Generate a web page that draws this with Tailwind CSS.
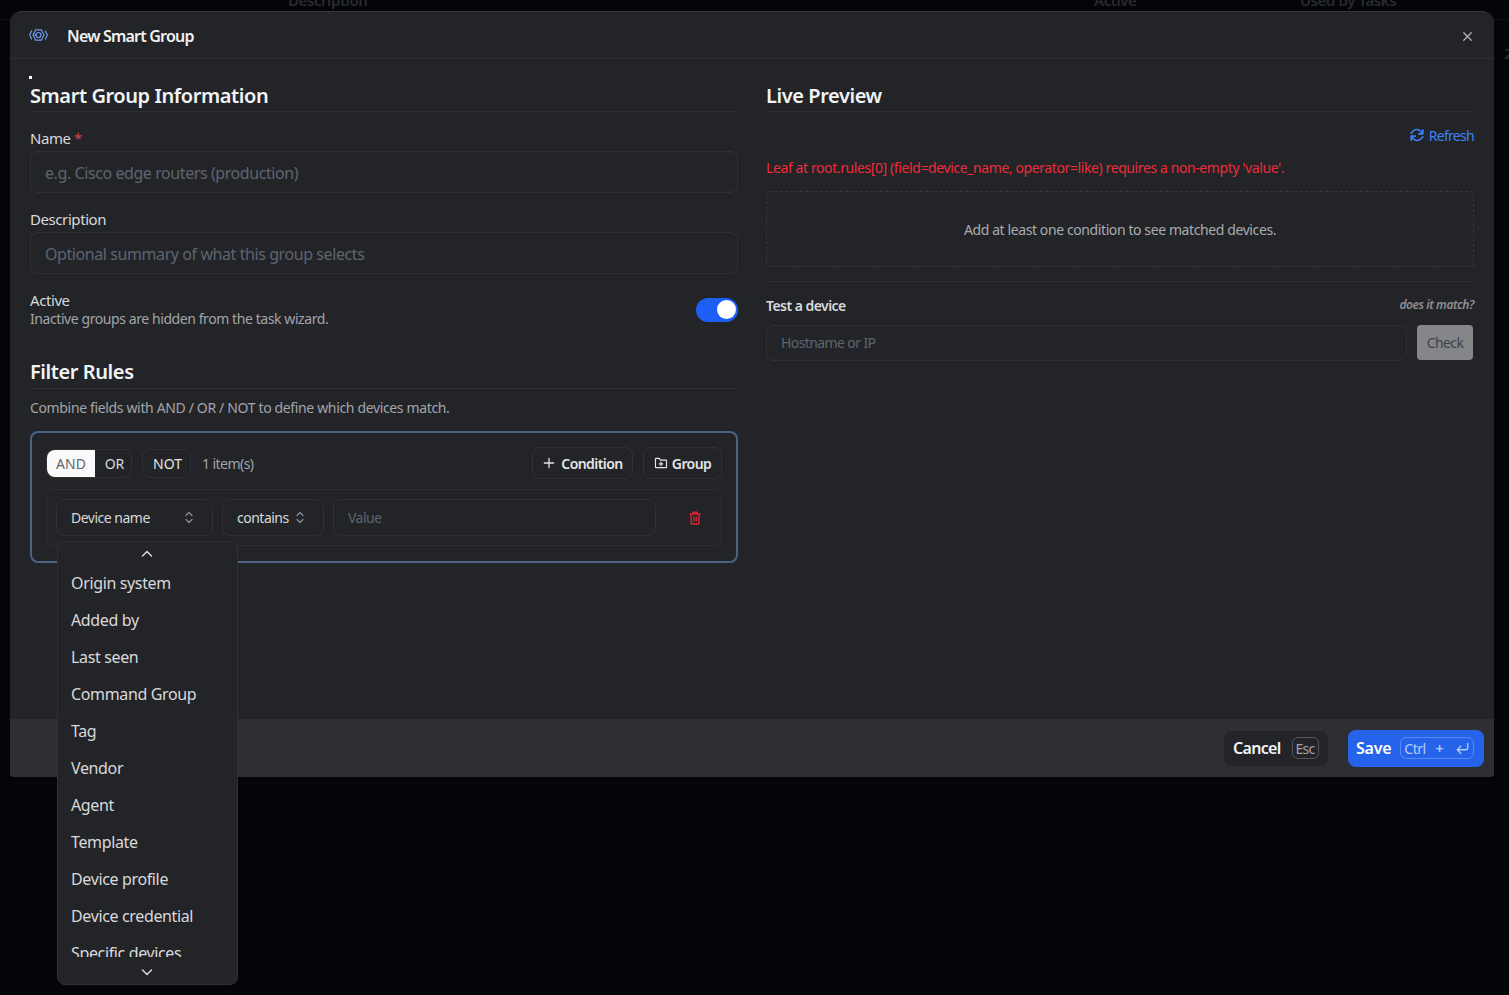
<!DOCTYPE html>
<html lang="en">
  <head>
    <meta charset="UTF-8" />
    <meta name="viewport" content="width=device-width, initial-scale=1.0" />
    <title>New Smart Group</title>
    <script src="https://cdn.jsdelivr.net/npm/@tailwindcss/browser@4"></script>
  </head>
  <body class="h-[995px] overflow-hidden bg-[#040508] font-['Noto_Sans',sans-serif] tracking-[-0.42px] text-[#e4e5e7]">
    <!-- table behind the modal -->
    <div class="absolute top-[19px] left-0 h-px w-full bg-[#0e0f12]"></div>
    <div class="absolute top-[-11px] left-0 w-full text-[15px] font-semibold text-[#2a2b2f]">
      <span class="absolute left-[288px]">Description</span>
      <span class="absolute left-[1094px]">Active</span>
      <span class="absolute left-[1300px]">Used by Tasks</span>
      <span class="absolute top-[53px] left-[1504px]">2</span>
    </div>

    <div class="relative mt-[11px] ml-[10px] flex h-[766px] w-[1484px] flex-col overflow-hidden rounded-t-xl rounded-b-[4px] border-t border-[#37383c] bg-[#232428]">
      <!-- header -->
      <div class="flex h-[47px] shrink-0 items-center border-b border-[#2e2f33] px-[20px]">
        <svg class="-ml-[1px] h-[14px] w-[19px] text-[#6f9ae8]" viewBox="0 0 19 14" fill="none" stroke="currentColor" stroke-width="1.2">
          <path d="M2.800 2.500 0.700 7l2.100 4.500M16.200 2.500 18.300 7l-2.100 4.500" />
          <path d="M6.700 1.800h5.600L15 7l-2.700 5.200H6.700L4 7z" />
          <path d="M4.500 7H7M7 7a2.500 2.500 0 1 0 5 0a2.500 2.500 0 1 0-5 0" />
        </svg>
        <h1 class="ml-[19px] pt-[1px] text-[16px] font-semibold tracking-[-0.8px] text-[#f0f1f2]">New Smart Group</h1>
        <svg class="mt-[2px] -mr-[1px] ml-auto h-[15px] w-[15px] text-[#b4b5b8]" viewBox="0 0 24 24" fill="none" stroke="currentColor" stroke-width="2" stroke-linecap="round">
          <path d="M18 6 6 18M6 6l12 12" />
        </svg>
      </div>

      <!-- body -->
      <div class="grid flex-1 grid-cols-[708px_708px] gap-x-[28px] px-[20px]">
        <!-- left column -->
        <div class="relative pt-[22px]">
          <div class="absolute top-[17px] -left-[1px] h-[3px] w-[3px] bg-white"></div>
          <h2 class="flex h-[31px] items-center border-b border-[#2e2f33] pb-[1px] text-[20px] leading-none font-semibold text-[#f2f3f4]">Smart Group Information</h2>

          <label class="mt-[16px] mb-[3px] block text-[15px] leading-[20px] text-[#d8d9db]">Name <span class="text-[#d9404a]">*</span></label>
          <div class="flex h-[42px] items-center rounded-lg border border-[#303135] px-[14px] pt-[2px] text-[16px] text-[#5d6470]">e.g. Cisco edge routers (production)</div>

          <label class="mt-[16px] mb-[3px] block text-[15px] leading-[20px] text-[#d8d9db]">Description</label>
          <div class="flex h-[42px] items-center rounded-lg border border-[#303135] px-[14px] pt-[2px] text-[16px] text-[#5d6470]">Optional summary of what this group selects</div>

          <div class="mt-[16px] flex items-center justify-between">
            <div>
              <div class="mb-[2px] text-[15px] leading-[20px] text-[#d8d9db]">Active</div>
              <div class="text-[14px] leading-[14px] text-[#a2a4a9]">Inactive groups are hidden from the task wizard.</div>
            </div>
            <div class="mt-[3px] flex h-[24px] w-[42px] items-center justify-end rounded-full bg-[#1d5ff5] pr-[2px]">
              <div class="h-[19px] w-[19px] rounded-full bg-white"></div>
            </div>
          </div>

          <h2 class="mt-[31px] flex h-[32px] items-center border-b border-[#2e2f33] pb-[1px] text-[20px] leading-none font-semibold text-[#f2f3f4]">Filter Rules</h2>
          <p class="mt-[9px] text-[14px] leading-[20px] tracking-[-0.35px] text-[#a2a4a9]">Combine fields with AND / OR / NOT to define which devices match.</p>

          <!-- rule group -->
          <div class="mt-[13px] h-[132px] rounded-lg border-2 border-[#4a6283] px-[14px] pt-[14px]">
            <div class="flex h-[32px] items-center text-[14px]">
              <div class="flex h-[29px] w-[86px] rounded-lg border border-[#303135] tracking-normal">
                <div class="flex w-[48px] items-center justify-center rounded-l-lg bg-[#fafafb] text-[#63656b]">AND</div>
                <div class="flex flex-1 items-center justify-center pl-[3px] text-[#d8d9db]">OR</div>
              </div>
              <div class="ml-[10px] flex h-[29px] w-[49px] items-center justify-center rounded-lg border border-[#303135] pl-[2px] tracking-normal text-[#e4e5e7]">NOT</div>
              <span class="ml-[11px] tracking-[-0.55px] text-[#a2a4a9]">1 item(s)</span>
              <div class="ml-auto flex h-[32px] w-[101px] items-center justify-center gap-[5px] rounded-lg border border-[#303135] font-semibold tracking-[-0.55px]">
                <svg class="h-[14px] w-[14px]" viewBox="0 0 24 24" fill="none" stroke="currentColor" stroke-width="2.2" stroke-linecap="round"><path d="M12 4v16M4 12h16" /></svg>
                Condition
              </div>
              <div class="ml-[10px] flex h-[32px] w-[79px] items-center justify-center gap-[4px] rounded-lg border border-[#303135] font-semibold tracking-[-0.6px]">
                <svg class="h-[14px] w-[14px]" viewBox="0 0 24 24" fill="none" stroke="currentColor" stroke-width="2" stroke-linecap="round" stroke-linejoin="round"><path d="M2.500 5a1 1 0 0 1 1-1h5.500l2 3h9.500a1 1 0 0 1 1 1v11a1 1 0 0 1-1 1h-17a1 1 0 0 1-1-1z" /><path d="M12 10.500v6M9 13.500h6" /></svg>
                Group
              </div>
            </div>
            <div class="mt-[10px] flex h-[57px] items-center rounded-lg border border-[#2e2f33] px-[9px] text-[14px] tracking-[-0.5px]">
              <div class="flex h-[37px] w-[157px] items-center justify-between rounded-lg border border-[#303135] pr-[18px] pl-[14px] text-[#d8d9db]">
                Device name
                <svg class="h-[13px] w-[10px] text-[#8d8f94]" viewBox="0 0 10 13" fill="none" stroke="currentColor" stroke-width="1.200" stroke-linecap="round" stroke-linejoin="round"><path d="M2 4.500 5 1.500l3 3M2 8.500l3 3 3-3" /></svg>
              </div>
              <div class="ml-[9px] flex h-[37px] w-[102px] items-center justify-between rounded-lg border border-[#303135] pr-[18px] pl-[14px] text-[#d8d9db]">
                contains
                <svg class="h-[13px] w-[10px] text-[#8d8f94]" viewBox="0 0 10 13" fill="none" stroke="currentColor" stroke-width="1.200" stroke-linecap="round" stroke-linejoin="round"><path d="M2 4.500 5 1.500l3 3M2 8.500l3 3 3-3" /></svg>
              </div>
              <div class="ml-[9px] flex h-[37px] w-[323px] items-center rounded-lg border border-[#303135] px-[14px] text-[#5d6470]">Value</div>
              <svg class="ml-[32px] h-[14px] w-[14px] text-[#dc2632]" viewBox="0 0 14 14" fill="none" stroke="currentColor" stroke-width="1.400" stroke-linejoin="round"><path d="M1.500 3h11M5 3V1.200h4V3M2.800 3l.5 10h7.400l.5-10M5.800 5.500v5M8.200 5.500v5" /></svg>
            </div>
          </div>
        </div>

        <!-- right column -->
        <div class="pt-[22px]">
          <h2 class="flex h-[31px] items-center border-b border-[#2e2f33] pb-[1px] text-[20px] leading-none font-semibold text-[#f2f3f4]">Live Preview</h2>
          <div class="mt-[13px] flex h-[20px] items-center justify-end gap-[5px] text-[14px] tracking-[-0.7px] text-[#3b82f6]">
            <svg class="h-[14px] w-[14px]" viewBox="0 0 24 24" fill="none" stroke="currentColor" stroke-width="2.800" stroke-linecap="round" stroke-linejoin="round"><path d="M22 3v7h-7M2 21v-7h7" /><path d="M21 10A9.500 9.500 0 0 0 5 5.500L2 9M3 14a9.500 9.500 0 0 0 16 4.500L22 15" /></svg>
            Refresh
          </div>
          <p class="mt-[13px] text-[14px] leading-[20px] tracking-[-0.4px] text-[#ef2b3a]">Leaf at root.rules[0] (field=device_name, operator=like) requires a non-empty 'value'.</p>
          <div class="mt-[13px] flex h-[76px] items-center justify-center rounded-sm border border-dashed border-[#37383c] pt-[1px] text-[14px] tracking-[-0.4px] text-[#a9abaf]">Add at least one condition to see matched devices.</div>
          <div class="mt-[14px] border-t border-[#2e2f33] pt-[13px]">
            <div class="flex h-[20px] items-center justify-between">
              <span class="text-[14px] font-semibold tracking-[-0.54px] text-[#d8d9db]">Test a device</span>
              <span class="text-[12px] font-semibold tracking-[-0.43px] text-[#8d8f94] italic">does it match?</span>
            </div>
            <div class="mt-[10px] flex items-start text-[14px] tracking-[-0.6px]">
              <div class="flex h-[36px] w-[641px] items-center rounded-lg border border-[#303135] px-[14px] pb-[1px] text-[#5d6470]">Hostname or IP</div>
              <div class="ml-[10px] flex h-[35px] w-[56px] items-center justify-center rounded-sm bg-[#85868a] text-[#404145]">Check</div>
            </div>
          </div>
        </div>
      </div>

      <!-- footer -->
      <div class="flex h-[58px] shrink-0 items-center justify-end bg-[#2e2f33] pr-[10px]">
        <div class="flex h-[35px] w-[104px] items-center gap-[11px] rounded-lg bg-[#232428] pl-[9px] text-[16px] font-semibold tracking-[-0.7px] text-[#f2f3f4]">
          Cancel
          <span class="flex h-[22px] w-[27px] items-center justify-center rounded-md border border-[#55565b] text-[14px] font-normal text-[#a2a4a9]">Esc</span>
        </div>
        <div class="ml-[20px] flex h-[37px] w-[136px] items-center rounded-lg bg-[#2563eb] pl-[8px] text-[16px] font-semibold tracking-[-0.25px] text-white">
          Save
          <span class="ml-[9px] flex h-[22px] w-[74px] items-center rounded-md border border-[#5a8af0] pr-[3px] pl-[3px] text-[14px] font-normal tracking-[-0.5px] text-[#b9cdf7]">
            Ctrl
            <span class="ml-[10px] font-semibold">+</span>
            <svg class="ml-auto h-[14px] w-[15px]" viewBox="0 0 24 24" fill="none" stroke="currentColor" stroke-width="2.200" stroke-linecap="round" stroke-linejoin="round"><path d="M21 4v8a3 3 0 0 1-3 3H3M9 9l-6 6 6 6" /></svg>
          </span>
        </div>
      </div>
    </div>

    <!-- open select menu -->
    <div class="absolute top-[541px] left-[57px] flex h-[444px] w-[181px] flex-col items-stretch overflow-hidden rounded-lg border border-[#303135] bg-[#232428] text-[16px] tracking-[-0.36px] text-[#d8d9db]">
      <svg class="mt-[7px] ml-[83px] h-[10px] w-[12px] shrink-0 text-[#d8d9db]" viewBox="0 0 12 10" fill="none" stroke="currentColor" stroke-width="1.500" stroke-linecap="round" stroke-linejoin="round"><path d="M1.500 7 6 2.500 10.500 7" /></svg>
      <div class="mt-[5px] h-[393px] shrink-0 overflow-hidden pl-[13px]">
        <div class="flex h-[37px] items-center">Origin system</div>
        <div class="flex h-[37px] items-center">Added by</div>
        <div class="flex h-[37px] items-center">Last seen</div>
        <div class="flex h-[37px] items-center">Command Group</div>
        <div class="flex h-[37px] items-center">Tag</div>
        <div class="flex h-[37px] items-center">Vendor</div>
        <div class="flex h-[37px] items-center">Agent</div>
        <div class="flex h-[37px] items-center">Template</div>
        <div class="flex h-[37px] items-center">Device profile</div>
        <div class="flex h-[37px] items-center">Device credential</div>
        <div class="flex h-[37px] items-center">Specific devices</div>
      </div>
      <svg class="mt-[10px] ml-[83px] h-[10px] w-[12px] shrink-0 text-[#d8d9db]" viewBox="0 0 12 10" fill="none" stroke="currentColor" stroke-width="1.500" stroke-linecap="round" stroke-linejoin="round"><path d="M1.500 3 6 7.500 10.500 3" /></svg>
    </div>
  </body>
</html>
